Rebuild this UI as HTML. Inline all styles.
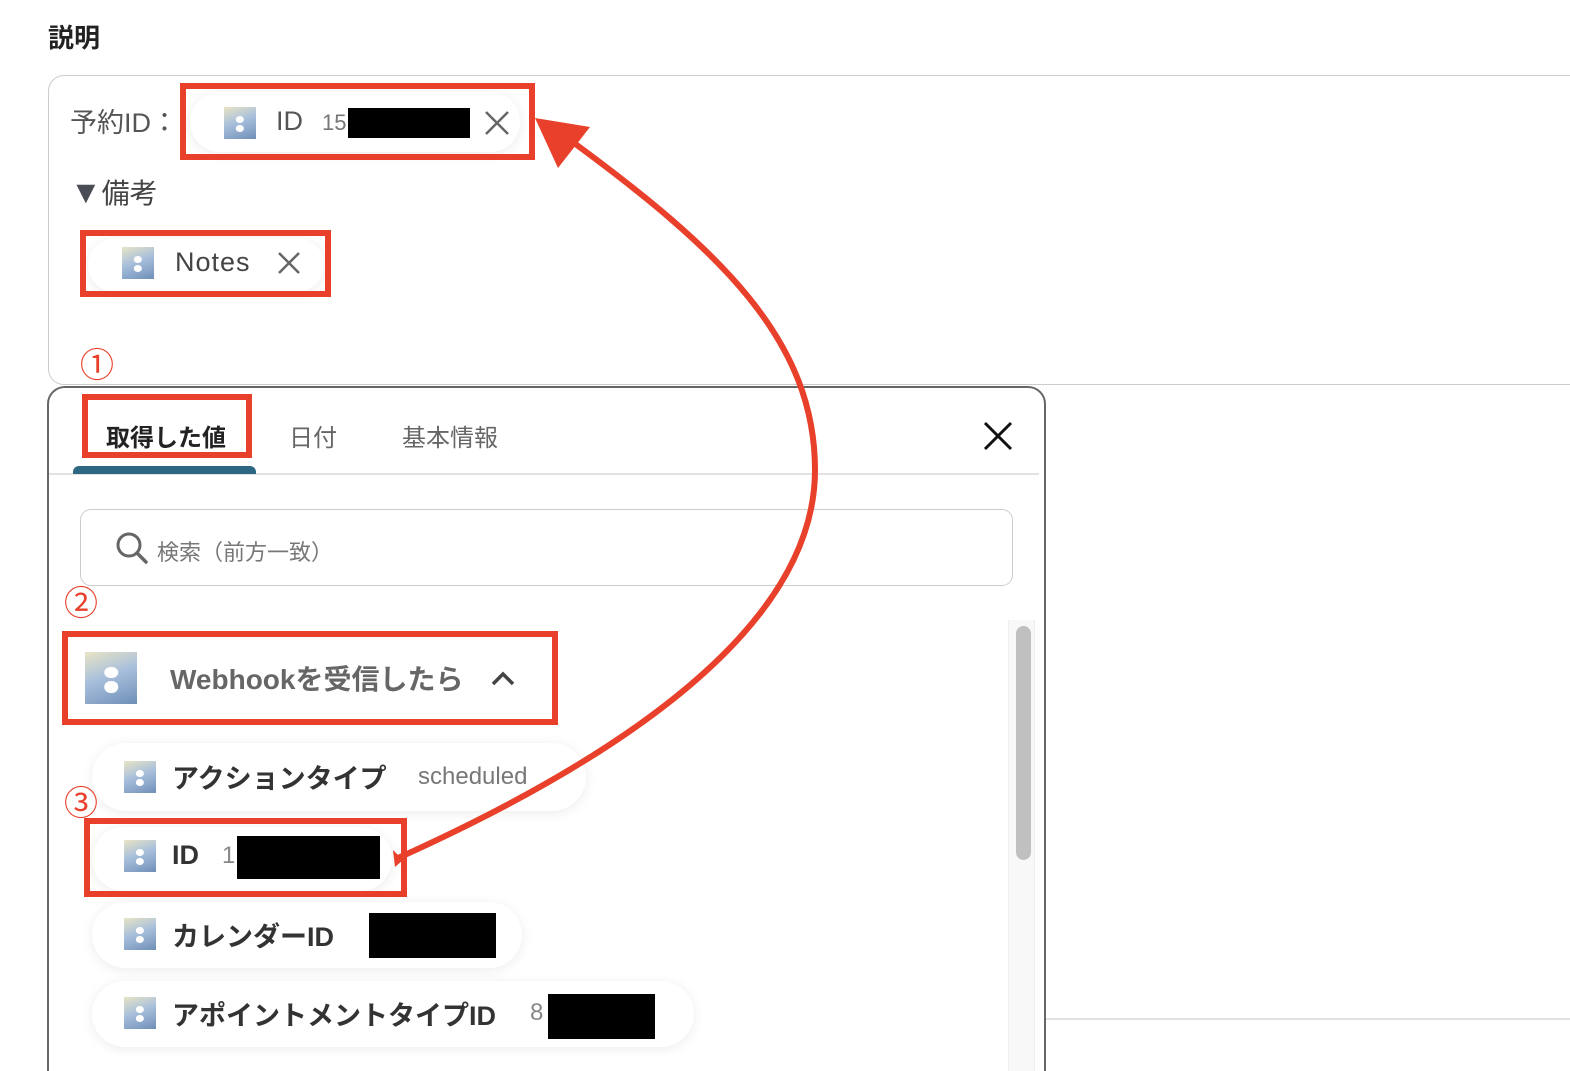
<!DOCTYPE html>
<html style="width:1570px;height:1071px;overflow:hidden"><head><meta charset="utf-8"><style>
*{box-sizing:border-box;margin:0;padding:0}
body{width:1570px;height:1071px;background:#fff;position:relative;overflow:hidden;font-family:"Liberation Sans","Noto Sans CJK JP",sans-serif;color:#333}
.a{position:absolute}
.ic{position:absolute;background:linear-gradient(160deg,#e9e4c4 0%,#a9c0dc 45%,#6f8fb8 100%)}
.ic:before,.ic:after{content:"";position:absolute;left:50%;width:26%;height:22%;border-radius:50%;background:#fff;transform:translateX(-50%)}
.ic:before{top:28%}.ic:after{top:56%}
.red{position:absolute;border:6px solid #e8402a}
.pill{position:absolute;background:#fff;border-radius:34px;box-shadow:0 2px 12px rgba(0,0,0,.08)}
.num{position:absolute;color:#e8402a;font-size:34px;line-height:1}
.bk{position:absolute;background:#000}
</style></head><body>
<div class="a" style="left:48px;top:18px;font-size:26px;font-weight:bold;color:#222">説明</div>
<div class="a" style="left:48px;top:75px;width:1560px;height:310px;border:1.5px solid #ccc;border-radius:16px"></div>
<div class="a" style="left:70px;top:101px;font-size:27px;color:#555">予約ID：</div>
<div class="pill" style="left:190px;top:92px;width:330px;height:60px"></div>
<div class="ic" style="left:224px;top:107px;width:32px;height:32px"></div>
<div class="a" style="left:276px;top:106px;font-size:27px;color:#555">ID</div>
<div class="a" style="left:322px;top:110px;font-size:22px;color:#777">15</div>
<div class="bk" style="left:348px;top:108px;width:122px;height:30px"></div>
<svg class="a" style="left:484px;top:110px" width="26" height="26"><path d="M2 2L24 24M24 2L2 24" stroke="#666" stroke-width="2.5"/></svg>
<div class="red" style="left:180px;top:83px;width:355px;height:77px"></div>
<div class="a" style="left:70px;top:172px;font-size:28px;color:#444"><span style="font-size:32px;color:#4a4d55">▼</span>備考</div>
<div class="pill" style="left:88px;top:238px;width:236px;height:54px"></div>
<div class="ic" style="left:122px;top:247px;width:32px;height:32px"></div>
<div class="a" style="left:175px;top:247px;font-size:27px;color:#444;letter-spacing:1px">Notes</div>
<svg class="a" style="left:277px;top:251px" width="24" height="24"><path d="M2 2L22 22M22 2L2 22" stroke="#666" stroke-width="2.5"/></svg>
<div class="red" style="left:80px;top:230px;width:251px;height:67px"></div>
<div class="num" style="left:80px;top:349px">①</div>

<div class="a" style="left:47px;top:386px;width:999px;height:720px;border:2px solid #666;border-radius:18px;background:#fff"></div>
<div class="a" style="left:106px;top:418px;font-size:24px;font-weight:bold;color:#222">取得した値</div>
<div class="a" style="left:289px;top:418px;font-size:24px;color:#666">日付</div>
<div class="a" style="left:402px;top:418px;font-size:24px;color:#666">基本情報</div>
<svg class="a" style="left:983px;top:421px" width="30" height="30"><path d="M2 2L28 28M28 2L2 28" stroke="#111" stroke-width="3"/></svg>
<div class="red" style="left:82px;top:394px;width:170px;height:64px"></div>
<div class="a" style="left:49px;top:473px;width:990px;height:2px;background:#e2e2e2"></div>
<div class="a" style="left:73px;top:466px;width:183px;height:8px;background:#2d6680;border-radius:6px 6px 0 0"></div>
<div class="a" style="left:80px;top:509px;width:933px;height:77px;border:1.5px solid #ccc;border-radius:11px"></div>
<svg class="a" style="left:114px;top:530px" width="36" height="36"><circle cx="15" cy="15" r="11" fill="none" stroke="#666" stroke-width="3"/><path d="M23 23l9 9" stroke="#666" stroke-width="3.5" stroke-linecap="round"/></svg>
<div class="a" style="left:157px;top:535px;font-size:22px;color:#777">検索（前方一致）</div>
<div class="num" style="left:64px;top:587px">②</div>
<div class="a" style="left:1008px;top:620px;width:27px;height:460px;background:#f8f8f8;border-left:1px solid #eee;border-right:1px solid #eee"></div>
<div class="a" style="left:1016px;top:626px;width:15px;height:234px;background:#c0c0c0;border-radius:8px"></div>
<div class="a" style="left:1046px;top:1018px;width:524px;height:2px;background:#e2e2e2"></div>

<div class="ic" style="left:85px;top:652px;width:52px;height:52px"></div>
<div class="a" style="left:170px;top:658px;font-size:28px;font-weight:bold;color:#666">Webhookを受信したら</div>
<svg class="a" style="left:490px;top:668px" width="26" height="20"><path d="M3 16L13 6l10 10" fill="none" stroke="#444" stroke-width="3.5"/></svg>
<div class="red" style="left:62px;top:631px;width:496px;height:94px"></div>

<div class="pill" style="left:92px;top:743px;width:494px;height:68px"></div>
<div class="ic" style="left:124px;top:761px;width:32px;height:32px"></div>
<div class="a" style="left:172px;top:757px;font-size:27px;font-weight:bold;color:#333">アクションタイプ</div>
<div class="a" style="left:418px;top:763px;font-size:24px;color:#777">scheduled</div>
<div class="num" style="left:64px;top:787px">③</div>
<div class="pill" style="left:92px;top:827px;width:300px;height:64px"></div>
<div class="ic" style="left:124px;top:840px;width:32px;height:32px"></div>
<div class="a" style="left:172px;top:840px;font-size:27px;font-weight:bold;color:#333">ID</div>
<div class="a" style="left:222px;top:842px;font-size:24px;color:#888">1</div>
<div class="bk" style="left:237px;top:836px;width:143px;height:43px"></div>
<div class="red" style="left:84px;top:818px;width:323px;height:79px"></div>
<div class="pill" style="left:92px;top:902px;width:430px;height:66px"></div>
<div class="ic" style="left:124px;top:918px;width:32px;height:32px"></div>
<div class="a" style="left:172px;top:915px;font-size:27px;font-weight:bold;color:#333">カレンダーID</div>
<div class="bk" style="left:369px;top:913px;width:127px;height:45px"></div>
<div class="pill" style="left:92px;top:981px;width:602px;height:66px"></div>
<div class="ic" style="left:124px;top:997px;width:32px;height:32px"></div>
<div class="a" style="left:172px;top:994px;font-size:27px;font-weight:bold;color:#333">アポイントメントタイプID</div>
<div class="a" style="left:530px;top:999px;font-size:24px;color:#888">8</div>
<div class="bk" style="left:548px;top:994px;width:107px;height:45px"></div>

<svg class="a" style="left:0;top:0" width="1570" height="1071">
<path d="M398 858 C 660 740 815 610 815 470 C 815 340 720 250 570 140" fill="none" stroke="#e8402a" stroke-width="6"/>
<polygon points="535,118 590,127 558,168" fill="#e8402a"/>
<polygon points="393,850 403,860 395,867" fill="#e8402a"/>
</svg>
</body></html>
